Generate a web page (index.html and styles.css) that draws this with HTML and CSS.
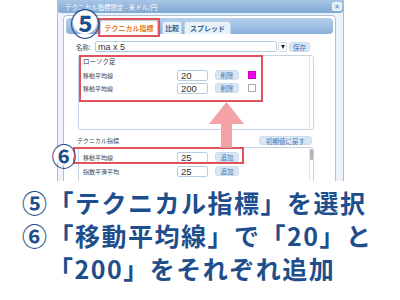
FILE: index.html
```html
<!DOCTYPE html>
<html lang="ja">
<head>
<meta charset="utf-8">
<link rel="stylesheet" href="styles.css">
</head>
<body>
<div class="page">
  <div class="window">
    <div class="titlebar">
      <span class="title">テクニカル指標設定 - 米ドル/円</span>
      <span class="close">×</span>
    </div>
    <div class="wbody">
      <div class="panel">
        <div class="tabs">
          <span class="tab active">テクニカル指標</span>
          <span class="tab t2">比較</span>
          <span class="tab t3">スプレッド</span>
        </div>
        <div class="content">
          <div class="name-row">
            <span class="lbl">名称:</span>
            <span class="input wide">ma x 5</span>
            <span class="drop"><span class="tri"></span></span>
            <span class="btn save">保存</span>
          </div>
          <div class="list list1">
            <div class="rows">
              <div class="group">ローソク足</div>
              <div class="row"><span class="rlabel">移動平均線</span><span class="input num">20</span><span class="btn">削除</span><span class="swatch magenta"></span></div>
              <div class="row r2"><span class="rlabel">移動平均線</span><span class="input num">200</span><span class="btn">削除</span><span class="swatch"></span></div>
            </div>
            <div class="vscroll"></div>
          </div>
          <div class="head-row">
            <span class="lbl">テクニカル指標</span>
            <span class="btn reset">初期値に戻す</span>
          </div>
          <div class="list list2">
            <div class="rows">
              <div class="row">
                <span class="rlabel">移動平均線</span><span class="input num">25</span><span class="btn">追加</span>
              </div>
              <div class="row r2b">
                <span class="rlabel">指数平滑平均</span><span class="input num">25</span><span class="btn">追加</span>
              </div>
            </div>
            <div class="vscroll"><div class="thumb"></div></div>
          </div>
        </div>
      </div>
    </div>
  </div>

  <div class="caption">
    <p>⑤「テクニカル指標」を選択</p>
    <p>⑥「移動平均線」で「20」と</p>
    <p class="indent">「200」をそれぞれ追加</p>
  </div>

  <div class="hl hl-tab"></div>
  <div class="hl hl-list"></div>
  <div class="hl hl-row"></div>
  <svg class="arrow" width="35" height="47" viewBox="0 0 35 47">
    <polygon points="17.5,0 35,22 23,22 23,46 12,46 12,22 0,22" fill="#f4a2a5"/>
  </svg>
  <span class="circ c5">⑤</span>
  <span class="circ c6">⑥</span>
</div>
</body>
</html>
```

FILE: styles.css
```css
* { box-sizing: border-box; margin: 0; padding: 0; }
html, body { width: 400px; height: 300px; background: #fff; overflow: hidden; }
body { font-family: "Liberation Sans", "Noto Sans CJK JP", sans-serif; }
.page { position: relative; width: 400px; height: 300px; }

.window {
  margin-left: 57px;
  width: 287px;
  height: 181px;
  border: 1px solid #a6bfd9;
  border-top: none;
  border-bottom: none;
  background: #eef3f9;
  overflow: hidden;
}
.titlebar {
  height: 13px;
  background: linear-gradient(#a9c6e5, #7ea7d3);
  display: flex;
  align-items: center;
  justify-content: space-between;
  padding: 0 1px 0 7px;
  border-radius: 0 0 3px 3px;
}
.title { color: #fff; font-size: 6.5px; font-family: "Noto Sans CJK JP", sans-serif; }
.close {
  width: 10px; height: 9px;
  background: #dfe9f4;
  border: 1px solid #f4f8fc;
  border-radius: 2px;
  color: #6a8ab0;
  font-size: 7px;
  font-weight: bold;
  display: flex; align-items: center; justify-content: center;
}
.wbody { padding: 2px 7px 0 5px; }
.panel {
  background: #fff;
  border: 1px solid #aac3dc;
  border-radius: 4px;
  height: 170px;
  padding: 2px;
}
.tabs {
  height: 16px;
  background: linear-gradient(#b6d0ec, #88b0da);
  border-radius: 4px;
  display: flex;
  align-items: flex-end;
  padding-left: 34px;
}
.tab {
  height: 13px;
  border: 1px solid #bcd1e7;
  border-bottom: none;
  border-radius: 3px 3px 0 0;
  background: #e8f0f8;
  font-family: "Noto Sans CJK JP", sans-serif;
  font-size: 7px;
  font-weight: bold;
  color: #2f5f8e;
  display: flex; align-items: center; justify-content: center;
}
.tab.active { width: 58px; height: 14px; background: #fff; color: #e8781e; margin-right: 4px; }
.tab.t2 { width: 20px; margin-right: 2px; }
.tab.t3 { width: 47px; }

.content { padding: 0 19px 0 10px; font-family: "Noto Sans CJK JP", sans-serif; }
.name-row { margin-top: 7px; height: 11px; display: flex; align-items: center; }
.lbl { font-size: 6.5px; color: #444; }
.name-row .lbl { width: 19px; }
.input {
  height: 11px;
  border: 1px solid #b9cde1;
  border-radius: 2px;
  background: #fff;
  font-family: "Liberation Sans", sans-serif;
  font-size: 9.5px;
  color: #333;
  padding-left: 2px;
  display: flex; align-items: center;
}
.input.wide { width: 182px; font-size: 9px; }
.drop {
  width: 9px; height: 10px; margin-left: 1px;
  background: #fff; border: 1px solid #d5dfe9; border-radius: 1px;
  display: flex; align-items: center; justify-content: center;
}
.tri { width: 0; height: 0; border-left: 2.5px solid transparent; border-right: 2.5px solid transparent; border-top: 4px solid #222; }
.btn {
  height: 10px;
  background: #d9e6f3;
  border: 1px solid #cddcec;
  border-radius: 3px;
  color: #4277b2;
  font-size: 6.5px;
  display: flex; align-items: center; justify-content: center;
}
.btn.save { width: 21px; margin-left: 2px; }

.list {
  margin: 3px 0 0 2px;
  border: 1px solid #c6d5e5;
  border-radius: 3px;
  display: flex;
}
.list1 { height: 75px; }
.list2 { height: 40px; margin-top: 1px; }
.rows { flex: 1; }
.vscroll { width: 4px; border-left: 1px solid #dfe6ee; padding-top: 1px; }
.thumb { width: 3px; height: 11px; background: #b4b4b4; border-radius: 2px; }

.group { height: 11px; line-height: 11px; padding-left: 4px; font-size: 6.5px; color: #333; }
.row { height: 12px; display: flex; align-items: center; padding-left: 4px; margin-top: 2px; }
.row.r2 { margin-top: 1px; }
.list2 .rows { padding-top: 3px; }
.list2 .row { margin-top: 0; }
.list2 .row.r2b { margin-top: 2px; }
.rlabel { width: 94px; font-size: 6px; color: #444; }
.input.num { width: 31px; padding-left: 3px; }
.row .btn { width: 24px; margin-left: 7px; }
.swatch { width: 8px; height: 8px; margin-left: 9px; border: 1px solid #aaa; background: #fff; }
.swatch.magenta { background: #ee00e6; border-color: #d000cc; }

.head-row { margin-top: 5px; height: 11px; display: flex; align-items: center; justify-content: space-between; }
.head-row .lbl { margin-left: 1px; font-size: 6px; }
.btn.reset { width: 53px; height: 9px; margin-right: 2px; }

.caption {
  margin-top: 5px;
  padding-left: 22px;
  font-family: "Noto Sans CJK JP", sans-serif;
  font-weight: bold;
  font-size: 25px;
  line-height: 33px;
  color: #1f4e8c;
  letter-spacing: 1.5px;
  white-space: nowrap;
}
.caption .indent { padding-left: 26px; }

.hl { position: absolute; border: 2px solid #e0525c; }
.hl-tab { left: 98px; top: 18px; width: 62px; height: 19px; }
.hl-list { left: 79px; top: 55px; width: 184px; height: 47px; }
.hl-row { left: 73px; top: 147px; width: 171px; height: 17px; }
.arrow { position: absolute; left: 209px; top: 102px; }
.circ {
  position: absolute;
  background: #fff;
  border-radius: 50%;
  color: #1f4e8c;
  font-family: "Noto Sans CJK JP", sans-serif;
  font-weight: bold;
  display: flex; align-items: center; justify-content: center;
  overflow: visible;
}
.c5 { left: 73px; top: 10px; width: 24px; height: 24px; font-size: 30px; line-height: 24px; }
.c6 { left: 54px; top: 145px; width: 20px; height: 20px; font-size: 25px; line-height: 20px; }
```
